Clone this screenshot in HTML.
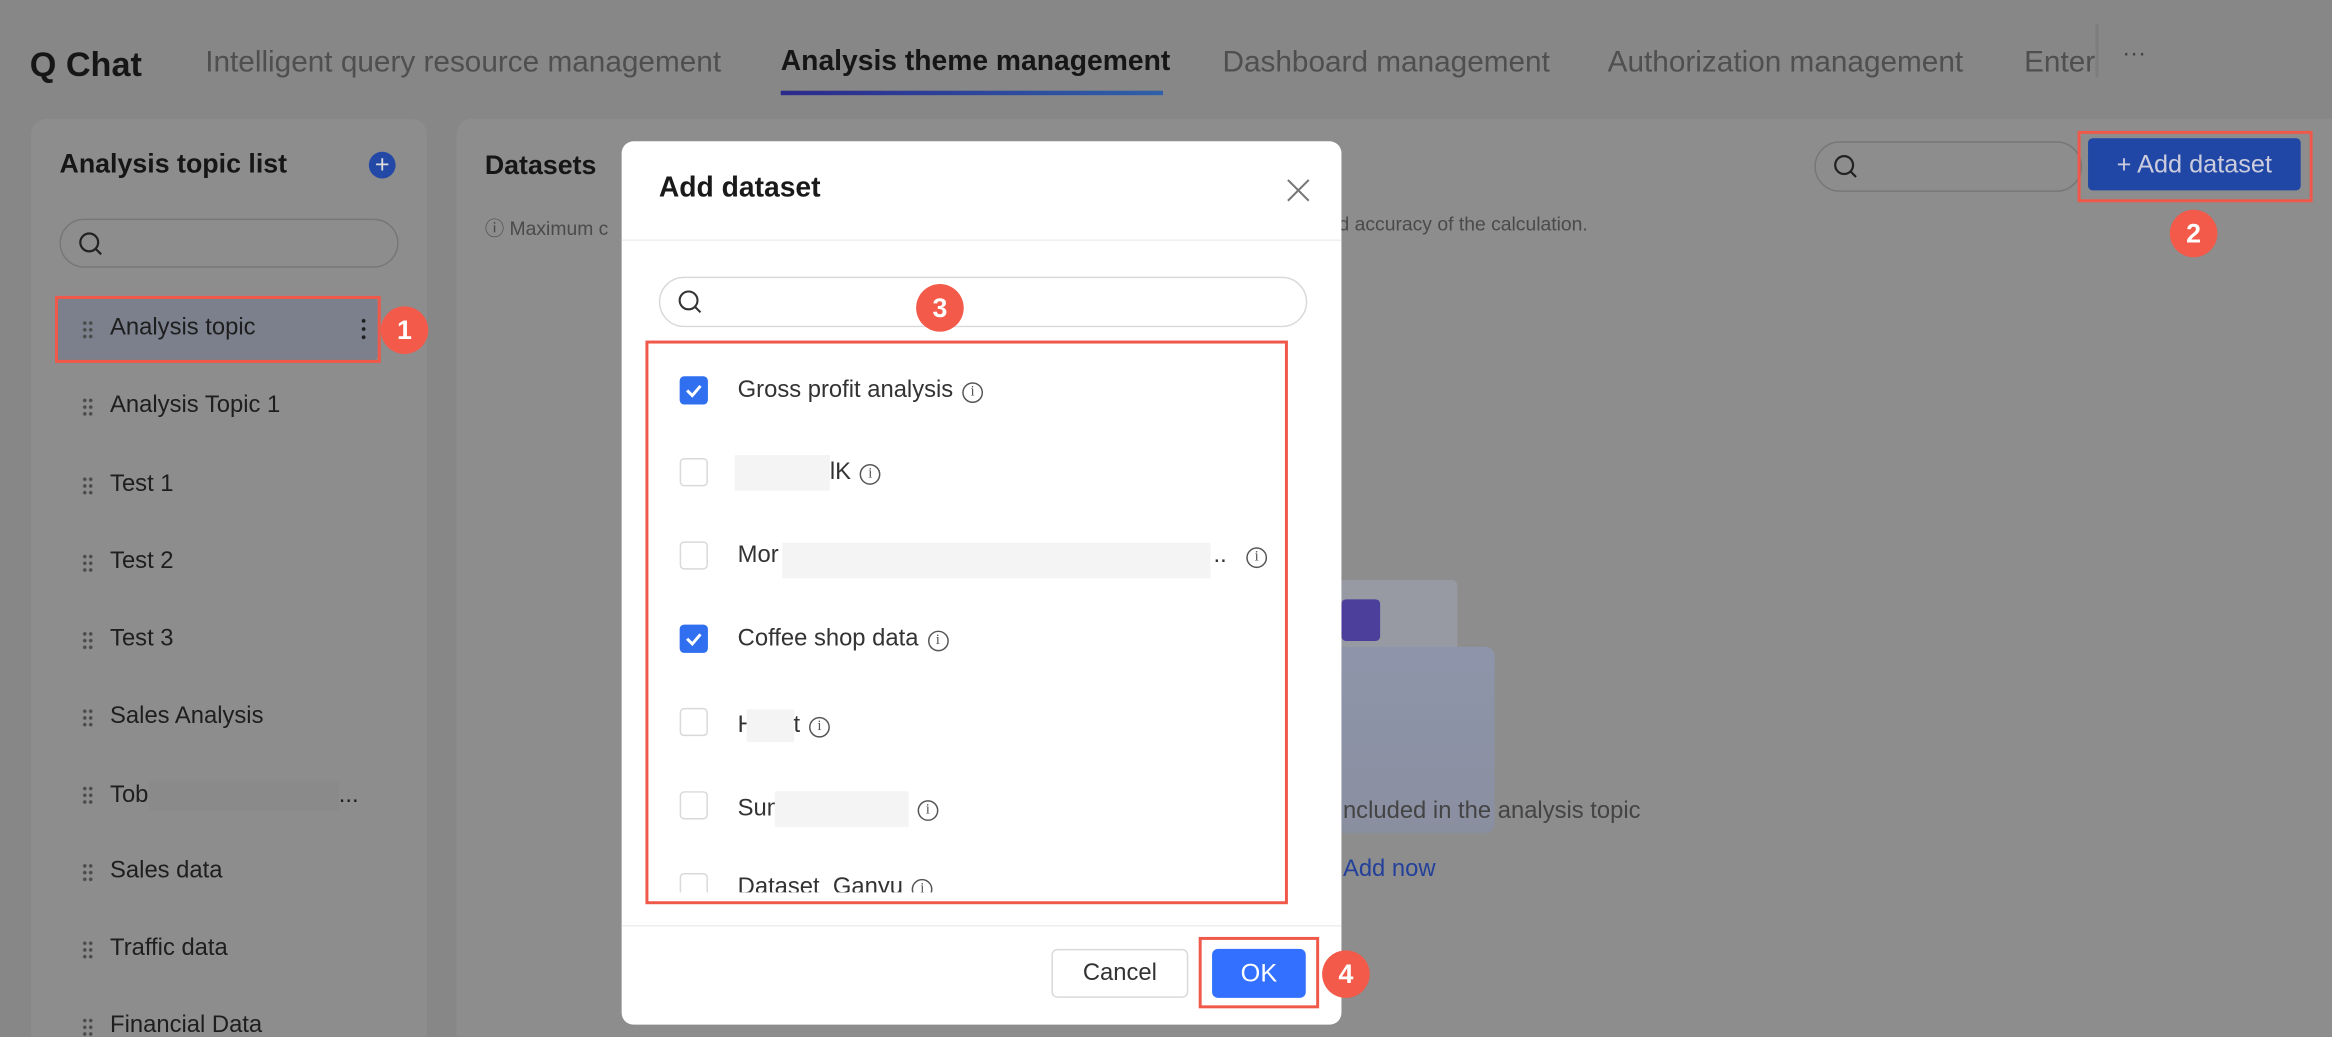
<!DOCTYPE html>
<html><head><meta charset="utf-8">
<style>
*{box-sizing:border-box;margin:0;padding:0}
html,body{width:2332px;height:1036px;overflow:hidden;background:#878787;font-family:"Liberation Sans",Arial,sans-serif}
#w{position:absolute;left:0;top:0;width:1568px;height:697px;overflow:hidden;transform:scale(1.4872);transform-origin:0 0;background:#878787}
.a{position:absolute}
.tab{position:absolute;top:31px;font-size:20px;color:#4f4f4f;white-space:nowrap}
.panel{position:absolute;background:#8d8d8d;border-radius:10px}
.item{position:absolute;left:74px;font-size:16px;color:#1e1e1e;white-space:nowrap}
.dg{position:absolute;left:55px;width:8px;height:13px;background-image:radial-gradient(circle,#4a4a4a 1.1px,transparent 1.3px);background-size:4px 4.5px}
.badge{position:absolute;width:32px;height:32px;border-radius:50%;background:#f35a4a;color:#fff;font-size:18px;text-align:center;line-height:32px;font-weight:bold}
.red{position:absolute;border:2px solid #f0584a}
.cb{position:absolute;left:457px;width:19px;height:19px;border:1px solid #d9d9d9;border-radius:3px;background:#fff}
.cb.on{background:#2f6ff0;border-color:#2f6ff0}
.lbl{position:absolute;left:496px;font-size:16px;color:#333;white-space:nowrap}
.info{display:inline-block;width:14px;height:14px;border:1px solid #555;border-radius:50%;font-size:10px;line-height:12px;text-align:center;color:#555;vertical-align:1px;margin-left:6px;font-family:"Liberation Serif",serif}
.blur{position:absolute;background:#f4f4f4}
</style></head><body><div id="w">
<div class="a" style="left:20px;top:30px;font-size:23px;font-weight:bold;color:#161616">Q Chat</div>
<div class="tab" style="left:138px">Intelligent query resource management</div>
<div class="tab" style="left:525px;color:#161616;font-weight:bold;font-size:19px">Analysis theme management</div>
<div class="a" style="left:525px;top:61px;width:257px;height:3px;background:linear-gradient(90deg,#2c2a8a,#2f60a8)"></div>
<div class="tab" style="left:822px">Dashboard management</div>
<div class="tab" style="left:1081px">Authorization management</div>
<div class="tab" style="left:1361px;width:48px;overflow:hidden">Enterprise</div>
<div class="a" style="left:1409px;top:16px;width:2px;height:36px;background:#7d7d7d"></div>
<div class="a" style="left:1427px;top:28px;font-size:16px;color:#444">···</div>

<div class="panel" style="left:21px;top:80px;width:266px;height:630px"></div>
<div class="a" style="left:40px;top:100px;font-size:18px;font-weight:bold;color:#161616">Analysis topic list</div>
<div class="a" style="left:248px;top:102px;width:18px;height:18px;border-radius:50%;background:#2448a6;color:#ddd;text-align:center;line-height:17px;font-size:17px">+</div>
<div class="a" style="left:40px;top:147px;width:228px;height:33px;border:1px solid #777;border-radius:17px"></div>
<svg class="a" style="left:52px;top:155px" width="18" height="18" viewBox="0 0 18 18"><circle cx="8" cy="8" r="6" fill="none" stroke="#222" stroke-width="1.5"/><path d="M12.5 12.5L16 16" stroke="#222" stroke-width="1.5"/></svg>
<div class="a" style="left:38px;top:200px;width:216px;height:43px;background:#7b808c;border-radius:4px"></div>
<div class="red" style="left:37px;top:199px;width:219px;height:45px"></div>
<div class="a" style="left:243px;top:213px;width:3px;height:16px;background-image:radial-gradient(circle,#1e1e1e 1.2px,transparent 1.4px);background-size:3px 5.5px"></div>
<div class="badge" style="left:256px;top:206px">1</div>
<div class="dg" style="top:215px"></div><div class="item" style="top:212px">Analysis topic</div>
<div class="dg" style="top:267px"></div><div class="item" style="top:264px">Analysis Topic 1</div>
<div class="dg" style="top:320px"></div><div class="item" style="top:317px">Test 1</div>
<div class="dg" style="top:372px"></div><div class="item" style="top:369px">Test 2</div>
<div class="dg" style="top:424px"></div><div class="item" style="top:421px">Test 3</div>
<div class="dg" style="top:476px"></div><div class="item" style="top:473px">Sales Analysis</div>
<div class="dg" style="top:528px"></div><div class="item" style="top:525px">Tob<span style="display:inline-block;width:128px;height:20px;background:#8a8a8a;vertical-align:middle"></span>...</div>
<div class="dg" style="top:580px"></div><div class="item" style="top:577px">Sales data</div>
<div class="dg" style="top:632px"></div><div class="item" style="top:629px">Traffic data</div>
<div class="dg" style="top:684px"></div><div class="item" style="top:681px">Financial Data</div>

<div class="panel" style="left:307px;top:80px;width:1280px;height:630px"></div>
<div class="a" style="left:326px;top:101px;font-size:18px;font-weight:bold;color:#161616">Datasets</div>
<div class="a" style="left:326px;top:143px;font-size:13px;color:#4a4a4a">ⓘ Maximum c</div>
<div class="a" style="left:900px;top:143px;font-size:13px;color:#4a4a4a">d accuracy of the calculation.</div>
<div class="a" style="left:1220px;top:95px;width:180px;height:34px;border:1px solid #777;border-radius:17px"></div>
<svg class="a" style="left:1232px;top:103px" width="18" height="18" viewBox="0 0 18 18"><circle cx="8" cy="8" r="6" fill="none" stroke="#222" stroke-width="1.5"/><path d="M12.5 12.5L16 16" stroke="#222" stroke-width="1.5"/></svg>
<div class="a" style="left:1404px;top:93px;width:143px;height:35px;background:#2047a6;border-radius:3px;color:#ccd;font-size:17px;line-height:35px;text-align:center">+ Add dataset</div>
<div class="red" style="left:1397px;top:88px;width:158px;height:48px"></div>
<div class="badge" style="left:1459px;top:141px">2</div>
<div class="a" style="left:860px;top:385px;width:150px;height:180px">
 <div class="a" style="left:40px;top:5px;width:80px;height:110px;background:#979aa3;border-radius:4px"></div>
 <div class="a" style="left:20px;top:50px;width:125px;height:125px;background:linear-gradient(180deg,#8e95aa,#8a8fa0);border-radius:6px"></div>
 <div class="a" style="left:42px;top:18px;width:26px;height:28px;background:#4c3f9c;border-radius:3px"></div>
</div>
<div class="a" style="left:903px;top:537px;font-size:16px;color:#444">ncluded in the analysis topic</div>
<div class="a" style="left:903px;top:576px;font-size:16px;color:#23409a">Add now</div>

<div class="a" style="left:418px;top:95px;width:484px;height:594px;background:#fff;border-radius:8px"></div>
<div class="a" style="left:443px;top:116px;font-size:19px;font-weight:bold;color:#1a1a1a">Add dataset</div>
<svg class="a" style="left:864px;top:119px" width="18" height="18" viewBox="0 0 18 18"><path d="M2 2L16 16M16 2L2 16" stroke="#777" stroke-width="1.4"/></svg>
<div class="a" style="left:418px;top:161px;width:484px;height:1px;background:#eee"></div>
<div class="a" style="left:443px;top:186px;width:436px;height:34px;border:1px solid #d9d9d9;border-radius:17px"></div>
<svg class="a" style="left:455px;top:194px" width="18" height="18" viewBox="0 0 18 18"><circle cx="8" cy="8" r="6" fill="none" stroke="#333" stroke-width="1.4"/><path d="M12.5 12.5L16 16" stroke="#333" stroke-width="1.4"/></svg>
<div class="badge" style="left:616px;top:191px">3</div>
<div class="a" style="left:437px;top:231px;width:426px;height:369px;overflow:hidden">
 <div style="position:absolute;left:-437px;top:-231px;width:1000px;height:1000px">
  <div class="cb on" style="top:253px"><svg width="17" height="17" viewBox="0 0 17 17"><path d="M4 8.5L7.5 12L13 5.5" stroke="#fff" stroke-width="2" fill="none"/></svg></div>
  <div class="lbl" style="top:254px">Gross profit analysis<span class="info">i</span></div>
  <div class="cb" style="top:308px"></div>
  <div class="blur" style="left:494px;top:306px;width:64px;height:24px"></div>
  <div class="lbl" style="left:558px;top:309px">lK<span class="info">i</span></div>
  <div class="cb" style="top:364px"></div>
  <div class="lbl" style="top:365px">Mor</div>
  <div class="blur" style="left:526px;top:365px;width:288px;height:24px"></div>
  <div class="lbl" style="left:816px;top:365px">..</div>
  <div class="lbl" style="left:832px;top:365px"><span class="info">i</span></div>
  <div class="cb on" style="top:420px"><svg width="17" height="17" viewBox="0 0 17 17"><path d="M4 8.5L7.5 12L13 5.5" stroke="#fff" stroke-width="2" fill="none"/></svg></div>
  <div class="lbl" style="top:421px">Coffee shop data<span class="info">i</span></div>
  <div class="cb" style="top:476px"></div>
  <div class="lbl" style="top:477px">H<span style="display:inline-block;width:32px;height:22px;background:#f4f4f4;vertical-align:middle;margin-left:-6px"></span>t<span class="info">i</span></div>
  <div class="cb" style="top:532px"></div>
  <div class="lbl" style="top:532px">Sum<span style="display:inline-block;width:90px;height:24px;background:#f4f4f4;vertical-align:middle;margin-left:-8px"></span><span class="info">i</span></div>
  <div class="cb" style="top:587px"></div>
  <div class="lbl" style="top:588px">Dataset_Ganyu<span class="info">i</span></div>
 </div>
</div>
<div class="red" style="left:434px;top:229px;width:432px;height:379px"></div>
<div class="a" style="left:418px;top:622px;width:484px;height:1px;background:#eee"></div>
<div class="a" style="left:707px;top:638px;width:92px;height:33px;border:1px solid #d9d9d9;border-radius:4px;text-align:center;line-height:31px;font-size:16px;color:#333">Cancel</div>
<div class="a" style="left:815px;top:638px;width:63px;height:33px;background:#3370ff;border-radius:4px;text-align:center;line-height:33px;font-size:17px;color:#fff">OK</div>
<div class="red" style="left:806px;top:630px;width:81px;height:48px"></div>
<div class="badge" style="left:889px;top:639px">4</div>
</div></body></html>
